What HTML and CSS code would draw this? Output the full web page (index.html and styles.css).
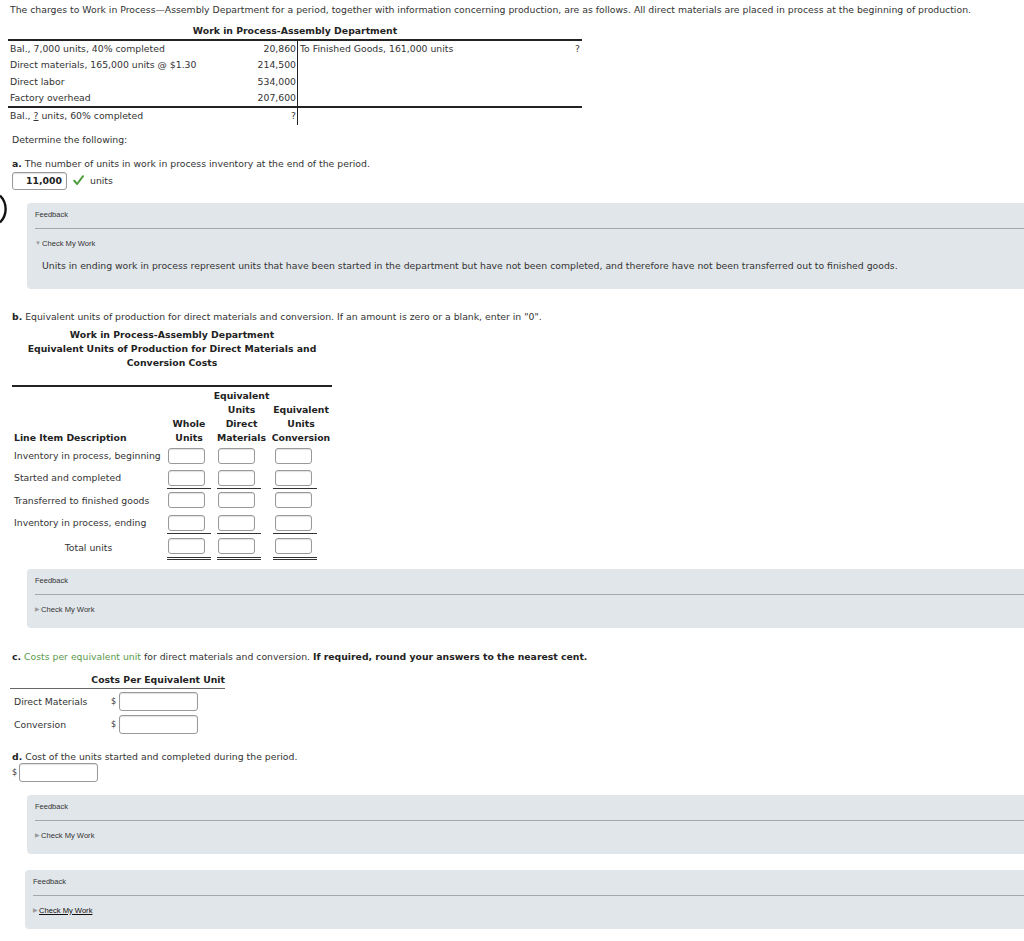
FILE: index.html
```html
<!DOCTYPE html>
<html lang="en">
<head>
<meta charset="utf-8">
<title>Work in Process</title>
<link rel="stylesheet" href="styles.css">
</head>
<body>
<div class="page">
  <p class="intro">The charges to Work in Process—Assembly Department for a period, together with information concerning production, are as follows. All direct materials are placed in process at the beginning of production.</p>

  <div class="acct">
    <div class="acct-title">Work in Process-Assembly Department</div>
    <table class="acct-table">
      <tr>
        <td class="lbl">Bal., 7,000 units, 40% completed</td>
        <td class="amt split">20,860</td>
        <td class="rlbl">To Finished Goods, 161,000 units</td>
        <td class="ramt">?</td>
      </tr>
      <tr>
        <td class="lbl">Direct materials, 165,000 units @ $1.30</td>
        <td class="amt split">214,500</td>
        <td class="rlbl"></td>
        <td class="ramt"></td>
      </tr>
      <tr>
        <td class="lbl">Direct labor</td>
        <td class="amt split">534,000</td>
        <td class="rlbl"></td>
        <td class="ramt"></td>
      </tr>
      <tr>
        <td class="lbl">Factory overhead</td>
        <td class="amt split">207,600</td>
        <td class="rlbl"></td>
        <td class="ramt"></td>
      </tr>
      <tr class="bal">
        <td class="lbl">Bal., <u>?</u> units, 60% completed</td>
        <td class="amt split">?</td>
        <td class="rlbl"></td>
        <td class="ramt"></td>
      </tr>
    </table>
  </div>

  <p class="q determine">Determine the following:</p>

  <p class="q qa"><b>a.</b> The number of units in work in process inventory at the end of the period.</p>
  <div class="answer-a">
    <span class="ans-box">11,000</span>
    <svg class="check" width="11" height="11" viewBox="0 0 11 11"><path d="M1.2 5.8 L4.2 9 L10 1.2" fill="none" stroke="#4f9e3c" stroke-width="2" stroke-linecap="round" stroke-linejoin="round"/></svg>
    <span class="unit">units</span>
  </div>

  <svg class="arc" width="8" height="30" viewBox="0 0 8 30"><path d="M0 1.5 A 19 19 0 0 1 0 28.5" fill="none" stroke="#111" stroke-width="2.4"/></svg>

  <div class="fb fb1">
    <div class="fb-title">Feedback</div>
    <div class="fb-rule"></div>
    <div class="cmw"><span class="tri">▼</span>Check My Work</div>
    <p class="fb-text">Units in ending work in process represent units that have been started in the department but have not been completed, and therefore have not been transferred out to finished goods.</p>
  </div>

  <p class="q qb"><b>b.</b> Equivalent units of production for direct materials and conversion. If an amount is zero or a blank, enter in "0".</p>

  <div class="eq-title">
    <div>Work in Process-Assembly Department</div>
    <div>Equivalent Units of Production for Direct Materials and</div>
    <div>Conversion Costs</div>
  </div>

  <table class="eq">
    <colgroup>
      <col class="w-desc">
      <col class="w-c1">
      <col class="w-c2">
      <col class="w-c3">
    </colgroup>
    <tr class="head">
      <th class="desc">Line Item Description</th>
      <th>Whole<br>Units</th>
      <th>Equivalent<br>Units<br>Direct<br>Materials</th>
      <th>Equivalent<br>Units<br>Conversion</th>
    </tr>
    <tr>
      <td class="desc">Inventory in process, beginning</td>
      <td class="c1"><div class="cell"><span class="inp"></span></div></td>
      <td class="c2"><div class="cell"><span class="inp"></span></div></td>
      <td class="c3"><div class="cell"><span class="inp"></span></div></td>
    </tr>
    <tr>
      <td class="desc">Started and completed</td>
      <td class="c1"><div class="cell ul"><span class="inp"></span></div></td>
      <td class="c2"><div class="cell ul"><span class="inp"></span></div></td>
      <td class="c3"><div class="cell ul"><span class="inp"></span></div></td>
    </tr>
    <tr class="r3">
      <td class="desc">Transferred to finished goods</td>
      <td class="c1"><div class="cell"><span class="inp"></span></div></td>
      <td class="c2"><div class="cell"><span class="inp"></span></div></td>
      <td class="c3"><div class="cell"><span class="inp"></span></div></td>
    </tr>
    <tr>
      <td class="desc">Inventory in process, ending</td>
      <td class="c1"><div class="cell ul"><span class="inp"></span></div></td>
      <td class="c2"><div class="cell ul"><span class="inp"></span></div></td>
      <td class="c3"><div class="cell ul"><span class="inp"></span></div></td>
    </tr>
    <tr class="total">
      <td class="desc center">Total units</td>
      <td class="c1"><div class="cell dbl"><span class="inp"></span></div></td>
      <td class="c2"><div class="cell dbl"><span class="inp"></span></div></td>
      <td class="c3"><div class="cell dbl"><span class="inp"></span></div></td>
    </tr>
  </table>

  <div class="fb fb2">
    <div class="fb-title">Feedback</div>
    <div class="fb-rule"></div>
    <div class="cmw"><span class="tri">▶</span>Check My Work</div>
  </div>

  <p class="q qc"><b>c.</b> <span class="green">Costs per equivalent unit</span> for direct materials and conversion. <b>If required, round your answers to the nearest cent.</b></p>

  <div class="cpu">
    <div class="cpu-head">Costs Per Equivalent Unit</div>
    <div class="cpu-row first"><span class="cpu-lbl">Direct Materials</span><span class="dollar">$</span><span class="inp wide"></span></div>
    <div class="cpu-row"><span class="cpu-lbl">Conversion</span><span class="dollar">$</span><span class="inp wide"></span></div>
  </div>

  <p class="q qd"><b>d.</b> Cost of the units started and completed during the period.</p>
  <div class="answer-d"><span class="dollar">$</span><span class="inp wide"></span></div>

  <div class="fb fb3">
    <div class="fb-title">Feedback</div>
    <div class="fb-rule"></div>
    <div class="cmw"><span class="tri">▶</span>Check My Work</div>
  </div>

  <div class="fb fb4">
    <div class="fb-title">Feedback</div>
    <div class="fb-rule"></div>
    <div class="cmw"><span class="tri">▶</span><span class="link">Check My Work</span></div>
  </div>
</div>
</body>
</html>
```

FILE: styles.css
```css
html, body {
  margin: 0;
  padding: 0;
  background: #fff;
}
body {
  font-family: "DejaVu Sans", Verdana, sans-serif;
  font-size: 9.3px;
  color: #333;
  overflow-x: hidden;
}
.page {
  position: relative;
  padding: 3px 0 0 10px;
}
p { margin: 0; }
b { color: #222; }

.intro {
  line-height: 13px;
}

/* T-account */
.acct {
  margin: 8px 0 0 -2px;
  width: 574px;
}
.acct-title {
  text-align: center;
  font-weight: bold;
  color: #222;
  line-height: 14px;
  padding-bottom: 1px;
}
.acct-table {
  width: 574px;
  border-collapse: collapse;
  border-top: 2px solid #222;
}
.acct-table td {
  height: 16.33px;
  line-height: 16px;
  padding: 0 2px;
  white-space: nowrap;
}
.acct-table .lbl { width: 226px; }
.acct-table .amt { width: 56px; text-align: right; }
.acct-table .split { border-right: 1.5px solid #222; padding-right: 1px; }
.acct-table .rlbl { width: 226px; }
.acct-table .ramt { text-align: right; }
.acct-table .bal td { border-top: 2px solid #222; }

/* questions */
.q { padding-left: 2px; line-height: 13px; }
.determine { margin-top: 8px; }
.qa { margin-top: 11px; }

.answer-a {
  margin: 2px 0 0 2px;
  display: flex;
  align-items: center;
  height: 18px;
}
.ans-box {
  box-sizing: border-box;
  width: 55px;
  height: 18px;
  border: 1px solid #999;
  border-radius: 3px;
  box-shadow: inset 0 1px 1px rgba(0,0,0,0.12);
  font-weight: bold;
  color: #222;
  text-align: right;
  padding-right: 4px;
  line-height: 16px;
}
.check { margin-left: 6px; }
.unit { margin-left: 6px; }

.arc {
  position: absolute;
  left: 0;
  top: 194px;
}

/* feedback panels */
.fb {
  margin-right: -20px;
  margin-left: 17px;
  background: #e1e6ea;
  border-radius: 4px;
  padding: 7px 0 13px 8px;
  font-family: "Liberation Sans", Arial, sans-serif;
  color: #333;
}
.fb-title {
  font-size: 7.5px;
  line-height: 10px;
}
.fb-rule {
  margin-top: 8px;
  border-top: 1px solid #a3a8ad;
}
.cmw {
  margin-top: 9px;
  font-size: 7.6px;
  line-height: 10px;
}
.tri {
  color: #9a9a9a;
  font-size: 6px;
  margin-right: 1px;
  vertical-align: 1px;
}
.link {
  color: #111;
  text-decoration: underline;
}
.fb-text {
  font-family: "DejaVu Sans", Verdana, sans-serif;
  font-size: 9.3px;
  line-height: 13px;
  margin: 10px 0 4px 7px;
}
.fb1 { margin-top: 13px; }
.fb2 { margin-top: 7px; }
.fb3 { margin-top: 13px; }
.fb4 { margin-top: 16px; margin-left: 15px; }

.qb { margin-top: 21px; }

.eq-title {
  margin-top: 5px;
  width: 320px;
  margin-left: 2px;
  text-align: center;
  font-weight: bold;
  color: #222;
  line-height: 14px;
}
.eq {
  margin: 15px 0 0 2px;
  width: 320px;
  table-layout: fixed;
  border-collapse: collapse;
  border-top: 2px solid #222;
}
.w-desc { width: 153px; }
.w-c1 { width: 48px; }
.w-c2 { width: 57px; }
.w-c3 { width: 62px; }
.eq th {
  font-weight: bold;
  color: #222;
  line-height: 14px;
  vertical-align: bottom;
  text-align: center;
  padding: 2px 0 0;
  white-space: nowrap;
}
.eq th.desc { text-align: left; padding-left: 2px; }
.eq td { padding: 0; height: 22px; vertical-align: middle; }
.eq .desc { padding-left: 2px; white-space: nowrap; }
.eq .center { text-align: center; padding-left: 0; }
.eq .c1 { padding-left: 2px; }
.eq .c2 { padding-left: 4px; }
.eq .c3 { padding-left: 3px; }
.eq .c3 .inp { margin-left: 2px; }
.eq .r3 td { height: 23px; }
.eq .total td { height: 28px; }
.eq .total td.c1, .eq .total td.c2, .eq .total td.c3 { vertical-align: top; }
.cell {
  width: 44px;
  height: 22px;
  box-sizing: border-box;
  padding-top: 3px;
}
.cell.ul { border-bottom: 1px solid #333; }
.cell.dbl { border-bottom: 3px double #333; height: 26px; padding-top: 4px; }

.inp {
  display: block;
  box-sizing: border-box;
  width: 37px;
  height: 16px;
  margin-left: 1px;
  border: 1px solid #999;
  border-radius: 3px;
  background: #fff;
  box-shadow: inset 0 1px 1px rgba(0,0,0,0.12);
}
.inp.wide {
  display: inline-block;
  width: 79px;
  height: 19px;
  margin-left: 0;
}

.qc { margin-top: 22px; }
.green { color: #5a9b4a; }

.cpu {
  margin: 10px 0 0 0;
  width: 215px;
}
.cpu-head {
  font-weight: bold;
  color: #222;
  text-align: right;
  line-height: 14px;
  padding-bottom: 1px;
  border-bottom: 1px solid #666;
}
.cpu-row {
  display: flex;
  align-items: center;
  height: 23px;
}
.cpu-row.first { margin-top: 1px; }
.cpu-lbl { width: 97px; padding-left: 4px; }
.dollar { width: 8px; font-size: 8px; }

.qd { margin-top: 14px; }
.answer-d {
  display: flex;
  align-items: center;
  margin: 0 0 0 2px;
}
.answer-d .dollar { width: 7px; }
```
